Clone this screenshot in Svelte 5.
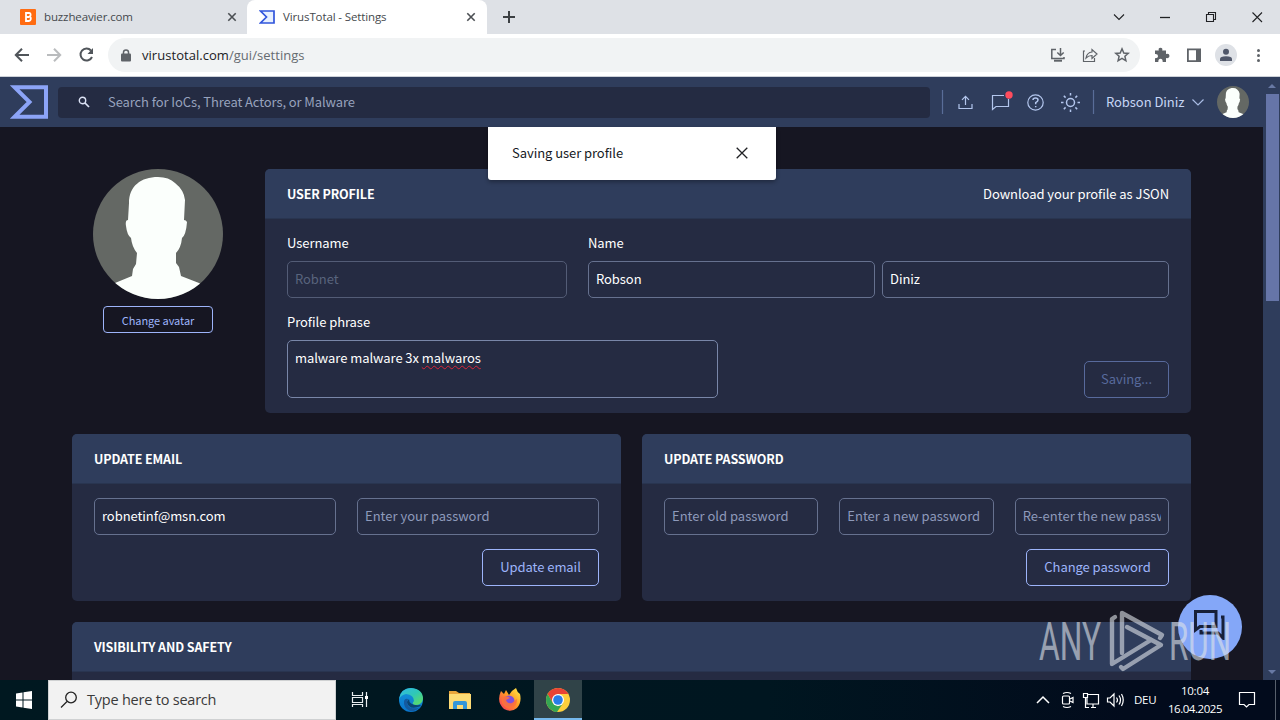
<script>
  const passwordFields = ['Enter old password', 'Enter a new password', 'Re-enter the new password'];
</script>

{#snippet person()}
  <svg viewBox="0 0 130 130" width="100%" height="100%">
    <rect width="130" height="130" fill="#646864" />
    <path fill="#fbfffc" d="M65 8C48 8 36 17 36 34L35 51Q32 51 33 57Q34 66 38 69Q39 78 44 84L43 95L40 100L39 107L22 114L0 130H130L106 114L88 107L86 98L83 94V84Q88 79 89 69Q93 66 94 53Q93 51 91 51L92 31Q91 21 82 14Q76 8 65 8Z" />
  </svg>
{/snippet}

<div class="screen">
  <div class="tabs">
    <div class="tab first">
      <svg width="16" height="16" viewBox="0 0 16 16"><rect width="16" height="16" rx="1" fill="#ff6c12" /><path d="M6 4H9Q11 4 10.5 6.5L9.5 7.7Q11 8 10.8 10Q10.5 12 9 12H6ZM6 8H9" fill="none" stroke="#fff" stroke-width="1.8" /></svg>
      <span>buzzheavier.com</span>
      <svg class="close" width="10" height="10" viewBox="0 0 10 10"><path d="M1.3 1.3L8.7 8.7M8.7 1.3L1.3 8.7" /></svg>
    </div>
    <div class="tab active">
      <svg width="16" height="14" viewBox="0 0 16 14"><path d="M1.5 1H15V13H1.5L7.5 7Z" fill="#e7f0ff" stroke="#3155dc" stroke-width="1.7" /></svg>
      <span>VirusTotal - Settings</span>
      <svg class="close" width="10" height="10" viewBox="0 0 10 10"><path d="M1.3 1.3L8.7 8.7M8.7 1.3L1.3 8.7" /></svg>
    </div>
    <svg class="plus" width="12" height="12" viewBox="0 0 12 12"><path d="M6 0V12M0 6H12" stroke="#3c4043" stroke-width="2" /></svg>
    <svg class="winbtns" width="156" height="28" viewBox="1110 0 156 28" fill="none" stroke="#202124" stroke-width="1.1">
      <path d="M1114 11.5L1119 16.5L1124 11.5" /><path d="M1160 14.5H1170" stroke-width="1.3" />
      <path d="M1206.5 11.5H1213.5V18.5H1206.5ZM1208.5 11V9.500H1215.500V16.5H1214" /><path d="M1252.500 9.500L1262 19M1262 9.500L1252.500 19" />
    </svg>
  </div>

  <div class="toolbar">
    <svg class="navicons" width="96" height="34" viewBox="0 38 96 34" fill="none" stroke="#50555a" stroke-width="2">
      <path d="M29 55H16M22 48.800L15.800 55L22 61.200" /><path stroke="#babcbe" d="M47 55H60M54 48.800L60.200 55L54 61.200" />
      <path d="M91 50.500A6 6 0 1 0 92 57" /><path d="M93 48V54H87.500Z" fill="#50555a" stroke="none" />
    </svg>
    <div class="omni">
      <svg width="10" height="13" viewBox="0 0 10 13"><rect y="4.500" width="10" height="8" rx="1" fill="#5f6368" /><path d="M2.500 5V3.300Q2.500 1 5 1T7.500 3.300V5" fill="none" stroke="#5f6368" stroke-width="1.500" /></svg>
      <span class="url">virustotal.com<i>/gui/settings</i></span>
      <svg class="omniicons" width="90" height="34" viewBox="1045 38 90 34" fill="none" stroke="#5f6368" stroke-width="1.500">
        <path d="M1056 49.500H1051.800V58.500H1064V57M1060.500 48V55M1057.300 52.500L1060.500 55.500L1063.700 52.500" /><path d="M1054 60.700H1062" stroke-width="2" />
        <path stroke-width="1.200" d="M1085 51H1083.500V61.500H1094.500V58M1086 58Q1087 52.500 1092 52V49.500L1097 54L1092 58.500V55.500Q1088.500 55.500 1086 58Z" />
        <path d="M1122 48.800L1123.800 53L1128.200 53.400L1124.900 56.300L1125.900 60.800L1122 58.400L1118.100 60.800L1119.100 56.300L1115.800 53.400L1120.200 53Z" />
      </svg>
    </div>
    <svg width="140" height="34" viewBox="1140 38 140 34">
      <path fill="#5f6368" d="M1155 50.500H1158.800Q1158 47.700 1160.500 47.700T1162.200 50.500H1166V54Q1169.500 53.300 1169.500 56T1166 58V62H1162.700Q1162.700 58.800 1160.500 58.800T1158.300 62H1155V58.200Q1158 58.200 1158 56T1155 54Z" />
      <path fill="#5f6368" fill-rule="evenodd" d="M1187 48.500H1201V62H1187ZM1188.800 50.200V60.300H1196V50.200Z" />
      <circle cx="1226" cy="55" r="11" fill="#dee1e6" /><circle cx="1226" cy="51.800" r="3" fill="#50576a" /><path d="M1220 61V59Q1220 56.300 1226 56.300T1232 59V61Z" fill="#50576a" />
      <g fill="#5f6368"><circle cx="1258.500" cy="50.500" r="1.500" /><circle cx="1258.500" cy="55.500" r="1.500" /><circle cx="1258.500" cy="60.500" r="1.500" /></g>
    </svg>
  </div>

  <div class="viewport">
    <div class="page">
      <header>
        <svg width="38" height="34" viewBox="0 0 38 34"><path d="M4.500 2.200H36V31.800H4.500L19.500 17Z" fill="none" stroke="#8ca4f7" stroke-width="4" /></svg>
        <div class="search">
          <svg width="12" height="12" viewBox="0 0 12 12" fill="none" stroke="#dce3f5" stroke-width="1.400"><circle cx="4.500" cy="4.500" r="3.200" /><path d="M7 7L11 11" stroke-width="1.700" /></svg>
          <span>Search for IoCs, Threat Actors, or Malware</span>
        </div>
        <svg class="headicons" width="166" height="40" viewBox="936 82 166 40" fill="none" stroke="#b3c6ed" stroke-width="1.200">
          <path d="M942.500 90V114M1093.500 90V114" stroke="#596d98" />
          <path d="M959 104V108.500H972V104M965.500 105V96.500M962 99.800L965.500 96.300L969 99.800" />
          <path d="M1004 95.500H992.500V109.500L996 106.500H1008.500V99" /><circle cx="1009" cy="95" r="3.700" fill="#ff4c5d" stroke="none" />
          <circle cx="1035.500" cy="102.500" r="7.700" /><path stroke-width="1.500" d="M1033 100Q1033 98 1035.500 98T1038 100Q1038 101.500 1035.700 102.700V104.300M1035.700 106V107.300" />
          <circle cx="1070.500" cy="102.500" r="4" stroke-width="1.500" /><path stroke-width="1.500" d="M1070.500 93V95.500M1070.500 109.500V112M1061 102.500H1063.500M1077.500 102.500H1080M1063.800 95.800L1065.600 97.600M1075.400 107.400L1077.200 109.200M1063.800 109.200L1065.600 107.400M1075.400 97.600L1077.200 95.800" />
        </svg>
        <span class="user">Robson Diniz</span>
        <svg class="chev" width="12" height="7" viewBox="0 0 12 7"><path d="M.5 .5L6 6L11.500 .5" fill="none" stroke="#a9bce4" stroke-width="1.200" /></svg>
        <div class="mini">{@render person()}</div>
      </header>

      <main>
        <div class="top">
          <div class="avatar-col">
            <div class="avatar">{@render person()}</div>
            <div class="btn small"><span>Change avatar</span></div>
          </div>
          <section class="card profile">
            <div class="head"><b>USER PROFILE</b><span>Download your profile as JSON</span></div>
            <div class="names">
              <div class="username"><div class="label">Username</div><div class="field off"><span>Robnet</span></div></div>
              <div class="fullname"><div class="label">Name</div><div class="pair"><div class="field"><span>Robson</span></div><div class="field"><span>Diniz</span></div></div></div>
            </div>
            <div class="phrase">
              <div><div class="label">Profile phrase</div><div class="area"><span>malware malware 3x <u>malwaros</u></span></div></div>
              <div class="btn saving"><span>Saving...</span></div>
            </div>
          </section>
        </div>
        <div class="two">
          <section class="card">
            <div class="head"><b>UPDATE EMAIL</b></div>
            <div class="row"><div class="field"><span>robnetinf@msn.com</span></div><div class="field ph"><span>Enter your password</span></div></div>
            <div class="actions"><div class="btn email"><span>Update email</span></div></div>
          </section>
          <section class="card">
            <div class="head"><b>UPDATE PASSWORD</b></div>
            <div class="row">{#each passwordFields as f}<div class="field ph"><span>{f}</span></div>{/each}</div>
            <div class="actions"><div class="btn pass"><span>Change password</span></div></div>
          </section>
        </div>
        <section class="card"><div class="head"><b>VISIBILITY AND SAFETY</b></div></section>
      </main>
    </div>
    <div class="scroll"><i class="up"></i><div class="thumb"></div><i class="down"></i></div>
  </div>

  <div class="toast"><span>Saving user profile</span><svg width="12" height="12" viewBox="0 0 12 12"><path d="M.7 .7L11.300 11.300M11.300 .7L.7 11.300" stroke="#202124" stroke-width="1.300" /></svg></div>

  <div class="chat"><svg width="32" height="30" viewBox="0 0 32 30" fill="none" stroke="#172039" stroke-width="3"><path d="M2.500 1.500H23V16.500H7L2.500 20Z" /><path d="M28 7H30V28L25 23H8V20" /></svg></div>
  <svg class="mark" width="200" height="64" viewBox="1035 609 200 64">
    <g fill="#dfe3e9" opacity=".6">
      <text x="1039" y="660" textLength="62" lengthAdjust="spacingAndGlyphs">ANY</text>
      <text x="1169" y="660" textLength="62" lengthAdjust="spacingAndGlyphs">RUN</text>
      <g fill="none" stroke="#dfe3e9" stroke-width="4.400" stroke-linejoin="round" stroke-linecap="round">
        <path d="M1122 653V613L1162 635L1160 638" /><path d="M1127 627L1161 645L1123 669L1121 667" /><path d="M1115 617L1112 619V664L1151 640" />
      </g>
    </g>
  </svg>

  <footer>
    <svg class="start" width="48" height="40" viewBox="0 0 48 40" fill="#fff"><path d="M16 13.500L22.500 12.500V19.500H16ZM23.500 12.300L32 11V19.500H23.500ZM16 20.500H22.500V27.500L16 26.600ZM23.500 20.500H32V29L23.500 27.700Z" /></svg>
    <div class="tsearch"><svg width="18" height="18" viewBox="0 0 18 18" fill="none" stroke="#222" stroke-width="1.300"><circle cx="11" cy="6.500" r="5.300" /><path d="M7 10.500L1 16.500" /></svg><span>Type here to search</span></div>
    <svg class="apps" width="246" height="40" viewBox="336 680 246 40">
      <defs>
        <linearGradient id="eg" x1="0" y1="0" x2="1" y2="1"><stop stop-color="#31b8e8" /><stop offset=".5" stop-color="#2fc8b5" /><stop offset="1" stop-color="#66df55" /></linearGradient>
        <linearGradient id="eb" x1="0" y1="0" x2="0" y2="1"><stop stop-color="#1595db" /><stop offset="1" stop-color="#0874cb" /></linearGradient>
        <linearGradient id="fx" x1="1" y1="0" x2="0" y2="1"><stop stop-color="#fff04d" /><stop offset=".45" stop-color="#ff9c24" /><stop offset="1" stop-color="#f52d63" /></linearGradient>
      </defs>
      <g fill="none" stroke="#e8edf0" stroke-width="1.200"><path d="M352.500 692V695.500H362.500V692M352.500 707V704.500H362.500V707M352.500 697.500H362.500V702.500H352.500ZM366.500 692V707" /></g><rect x="365" y="696" width="3" height="3" fill="#fff" />
      <circle cx="411" cy="700" r="12" fill="url(#eb)" />
      <path d="M399 699Q401 688 411 688Q423 689 423 699Q422 705 415 705Q411 704 414 701Q414 695 406 694Q401 695 399 699Z" fill="url(#eg)" />
      <path d="M408 699Q405 710 418 708Q422 706 421 706Q416 712 410 711Q403 708 404 701Q405 698 408 699Z" fill="#145a9f" /><path d="M409 699Q409 706 420 705L421 706Q409 711 407 702Z" fill="#0b4473" />
      <path d="M449 691H456L459 693H470V708H449Z" fill="#e9a53b" /><path d="M449 694H471V709H449Z" fill="#fddb75" /><path d="M453 709V703Q453 701 455 701H465Q467 701 467 703V709H463V705H457V709Z" fill="#3497d9" />
      <path d="M501 691L504 694L506 690L509 695Q512 690 516 688Q517 692 520 694Q522 702 517 708Q511 713 504 709Q496 702 501 691Z" fill="url(#fx)" /><circle cx="509" cy="701" r="5.500" fill="#8050dc" /><path d="M502 697Q507 695 510 698L506 700Q507 704 512 703L517 699Q517 708 509 709Q500 706 502 697Z" fill="#ff7139" opacity=".9" />
      <rect x="534" y="680" width="48" height="40" fill="#304348" /><rect x="534" y="718" width="48" height="2" fill="#76b9ed" />
      <circle cx="558" cy="700" r="12" fill="#fdcf3c" /><path d="M547.600 694A12 12 0 0 1 568.400 694H558L552.800 703Z" fill="#e94335" /><path d="M547.600 694L552.800 703L558 706L555 711.600A12 12 0 0 1 547.600 694Z" fill="#35a653" /><path d="M563.200 703L557 712Q554 712 553 711L558 706Z" fill="#35a653" /><circle cx="558" cy="700" r="6" fill="#fff" /><circle cx="558" cy="700" r="4.800" fill="#287de8" />
    </svg>
    <svg class="tray" width="94" height="40" viewBox="1034 680 94 40" fill="none" stroke="#fff" stroke-width="1.200">
      <path d="M1037 703L1043 697L1049 703" stroke-width="1.500" /><rect x="1062.500" y="696" width="7" height="8" rx="1" /><path d="M1070 699L1073 697.500V702.500L1070 701M1063 693.500Q1067 691.500 1071 693.500M1063 706.500Q1067 708.500 1071 706.500" />
      <path d="M1088 694.500H1098.500V704H1087V698M1091 707.500H1096M1093 704V707M1083.500 693.500H1087.500V697.500H1083.500ZM1085.500 698V707.500H1089" />
      <path d="M1107.500 698H1110L1114 694V706L1110 702H1107.500ZM1116.500 697.500Q1118.500 700 1116.500 702.500M1119 695.500Q1122 700 1119 704.500M1121.500 694Q1125 700 1121.500 706" />
    </svg>
    <span class="lang">DEU</span>
    <div class="clock"><span class="time">10:04</span><span class="date">16.04.2025</span></div>
    <svg class="note" width="18" height="18" viewBox="0 0 18 18"><path d="M1.500 1.500H16.500V13.500H11L8.500 16L6 13.500H1.500Z" fill="none" stroke="#fff" stroke-width="1.200" /></svg>
    <div class="peek"></div>
  </footer>
</div>

<style>
  :global(body) { margin: 0; overflow: hidden; }
  .screen { position: relative; width: 1280px; height: 720px; overflow: hidden; display: flex; flex-direction: column; font: 13px/20px "Noto Sans CJK SC", sans-serif; letter-spacing: -.06px; color: #fff; }
  .screen * { box-sizing: border-box; }
  svg { display: block; flex: none; }
  span, b { white-space: nowrap; }
  .tabs { height: 34px; flex: none; display: flex; align-items: center; background: #dee1e6; color: #45494d; font: 11.5px/16px "Open Sans", sans-serif; letter-spacing: -.12px; }
  .tab { display: flex; align-items: center; height: 34px; }
  .first { width: 247px; padding: 0 10px 0 20px; gap: 8px; }
  .active { width: 240px; padding: 0 11px 0 12px; gap: 8px; background: #fff; border-radius: 8px 8px 0 0; }
  .close { margin-left: auto; stroke: #4b4f53; stroke-width: 1.600; }
  .plus { margin-left: 16px; }
  .winbtns { margin-left: auto; margin-right: 14px; }
  .toolbar { height: 43px; flex: none; display: flex; align-items: flex-start; padding-top: 4px; background: #fff; border-bottom: 1px solid #cdd1d8; }
  .omni { width: 1032px; height: 34px; margin-left: 12px; display: flex; align-items: center; padding: 0 5px 0 13px; border-radius: 17px; background: #f1f3f4; color: #202124; font: 13px/20px "Open Sans", sans-serif; letter-spacing: .04px; }
  .url { margin-left: 11px; }
  .url i { font-style: normal; color: #666b70; }
  .omniicons { margin-left: auto; }
  .viewport { height: 603px; flex: none; display: flex; }
  .page { width: 1263px; background: #161622; overflow: hidden; }
  header { height: 50px; display: flex; align-items: center; padding-left: 10px; background: #2f3d5c; color: #c6d5f5; }
  .search { width: 872px; height: 31px; margin-left: 10px; padding-left: 20px; display: flex; align-items: center; border-radius: 4px; background: #242b42; color: #97a2bd; }
  .search span { margin-left: 18px; letter-spacing: -.1px; }
  .headicons { margin-left: 6px; }
  .user { margin-left: 4px; width: 79px; }
  .chev { margin-left: 7px; }
  .mini { width: 32px; height: 32px; margin-left: 13px; border-radius: 50%; overflow: hidden; }
  main { display: flex; flex-direction: column; gap: 21px; padding: 42px 72px 0; }
  .top { display: flex; gap: 21px; }
  .avatar-col { width: 172px; display: flex; flex-direction: column; align-items: center; }
  .avatar { width: 130px; height: 130px; border-radius: 50%; overflow: hidden; }
  .btn { height: 37px; flex: none; display: flex; align-items: center; justify-content: center; padding-bottom: 1px; border: 1px solid #9db4fa; border-radius: 5px; color: #9db4fa; }
  .small { width: 110px; height: 27px; margin-top: 7px; padding-bottom: 0; border-radius: 4px; font-size: 11px; }
  .card { background: #252b42; border-radius: 5px; overflow: hidden; min-width: 0; }
  .profile { width: 926px; height: 244px; margin-right: -1px; flex: none; }
  .head { height: 50px; padding: 0 22px; display: flex; align-items: center; justify-content: space-between; background: #2f3d5c; border-bottom: 1px solid #293550; }
  b { font-weight: 700; font-size: 12.5px; letter-spacing: -.12px; }
  .names { display: flex; gap: 21px; padding: 14px 22px 0; }
  .username { width: 280px; }
  .fullname { flex: 1; }
  .label { height: 28px; line-height: 20px; }
  .pair { display: flex; gap: 7px; }
  .field { height: 37px; flex: 1; min-width: 0; display: flex; align-items: center; padding: 0 7px 2px; border: 1px solid #66718f; border-radius: 5px; }
  .field span { overflow: hidden; }
  .off { color: #59647d; border-color: #535c76; }
  .ph { color: #8e9abb; letter-spacing: 0; }
  .phrase { display: flex; justify-content: space-between; align-items: flex-end; padding: 14px 22px 0; }
  .area { width: 431px; height: 58px; border: 1px solid #7986a8; border-radius: 5px; padding: 7px; }
  .area span { display: block; }
  u { text-decoration: underline wavy #d9263a 1px; text-underline-offset: 2px; text-decoration-skip-ink: none; }
  .saving { width: 85px; color: #586a9c; border-color: #586a9c; }
  .two { display: grid; grid-template-columns: 549px 549px; gap: 21px; }
  .two .card { height: 167px; }
  .row { display: flex; gap: 21px; padding: 14px 22px 0; }
  .actions { display: flex; justify-content: flex-end; padding: 14px 22px 0; }
  .email { width: 117px; }
  .pass { width: 143px; }
  main > .card { width: 1119px; height: 60px; border-radius: 5px 5px 0 0; }
  .scroll { width: 17px; display: flex; flex-direction: column; align-items: center; padding: 7px 0 6px 1px; background: #2f3d5c; }
  .up, .down { border: 4px solid transparent; height: 0; width: 0; }
  .up { border-top: 0; border-bottom: 4px solid #6879a4; }
  .down { border-bottom: 0; border-top: 4px solid #6879a4; margin-top: auto; }
  .thumb { width: 13px; height: 207px; margin-top: 6px; background: #6675a8; }
  .toast { position: absolute; left: 488px; top: 127px; width: 288px; height: 53px; display: flex; align-items: center; justify-content: space-between; padding: 0 28.5px 1px 24px; background: #fff; color: #161a24; border-radius: 0 0 3px 3px; box-shadow: 0 2px 4px #0005; }
  .chat { position: absolute; left: 1178px; top: 595px; width: 64px; height: 64px; display: flex; align-items: center; justify-content: center; padding-bottom: 4px; padding-right: 2px; border-radius: 50%; background: #84a7f8; }
  .mark { position: absolute; left: 1035px; top: 609px; overflow: visible; }
  .mark text { font: 400 53px Roboto, sans-serif; letter-spacing: 0; }
  footer { height: 40px; flex: none; display: flex; align-items: center; background: linear-gradient(90deg, #001820, #001620 60%, #020b1c 88%); font: 11.5px/18px "Open Sans", sans-serif; letter-spacing: -.25px; }
  .tsearch { width: 288px; height: 40px; display: flex; align-items: center; padding-left: 11px; gap: 9px; background: #f2f2f2; border: 1px solid #cfd1d2; color: #3a3a3a; font-size: 14.5px; letter-spacing: -.22px; }
  .tray { margin-left: 452px; }
  .lang { width: 22px; margin-left: 6px; }
  .clock { width: 56px; margin-left: 11px; display: flex; flex-direction: column; align-items: center; }
  .date { letter-spacing: -.45px; }
  .note { margin-left: 15px; }
  .peek { width: 1px; height: 40px; margin-left: 19px; background: #57606c; }
</style>
